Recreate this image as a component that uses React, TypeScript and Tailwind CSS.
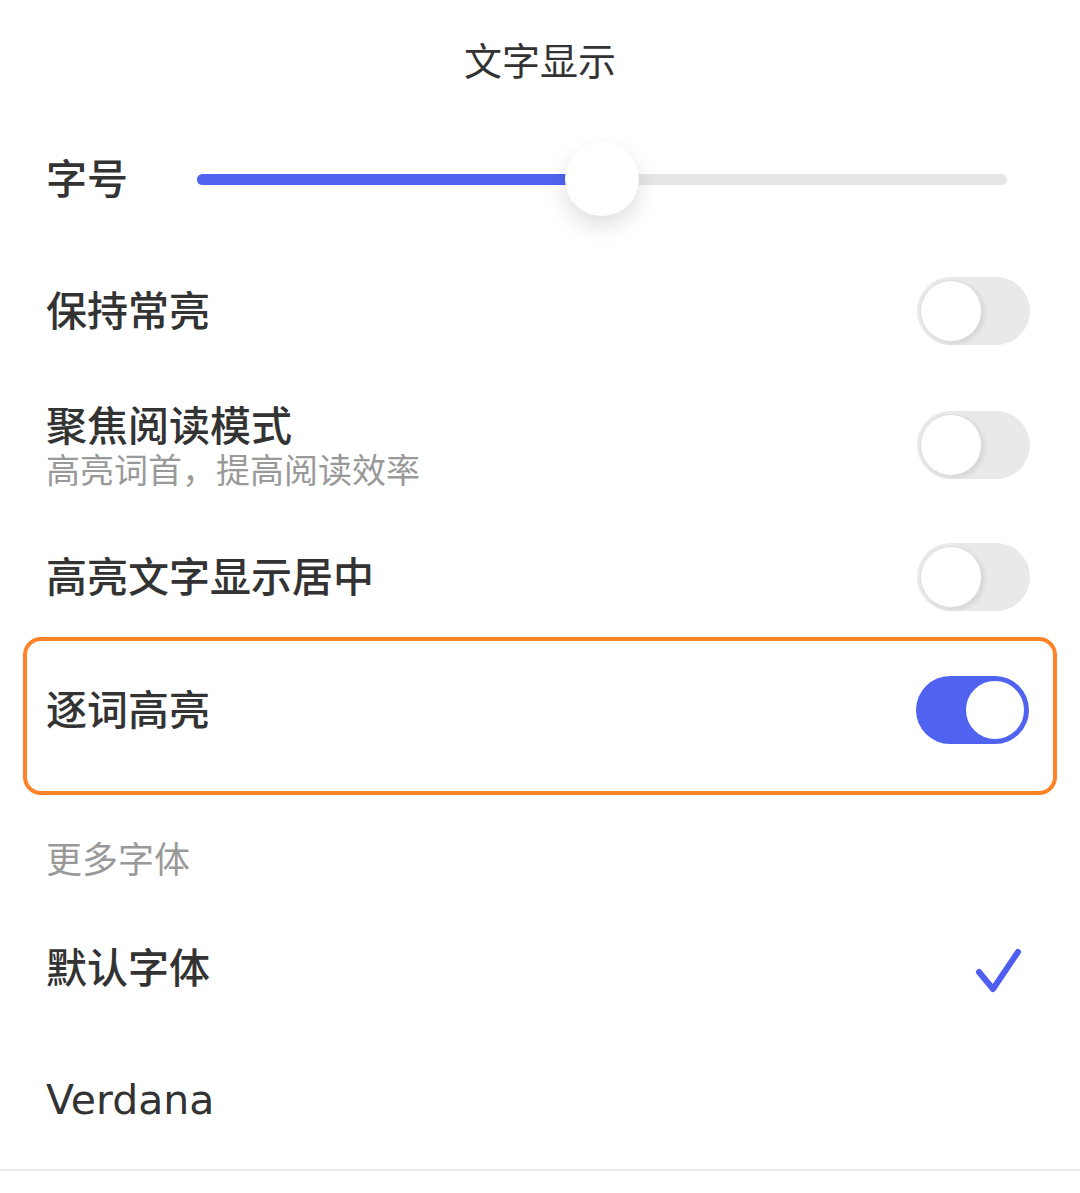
import React, { useState } from 'react';

const font = { fontFamily: '"Noto Sans CJK SC", "Noto Sans", sans-serif' };

const Toggle = ({ on, onClick }: { on: boolean; onClick: () => void }) => (
  <button
    onClick={onClick}
    className={`flex h-[68px] w-[113px] shrink-0 items-center rounded-full p-[3px] ${
      on ? 'justify-end bg-[#4f63f0]' : 'justify-start bg-[#e9e9e9]'
    }`}
  >
    <span
      className={`block h-[62px] w-[62px] rounded-full bg-white ${
        on
          ? 'border-[2px] border-[#4f63f0]'
          : 'border border-[#dcdcdc] shadow-[3px_2px_4px_rgba(0,0,0,0.08)]'
      }`}
    />
  </button>
);

const Check = () => (
  <svg width="52" height="52" viewBox="0 0 52 52" fill="none">
    <path
      d="M5 30 L19 47 L44 10"
      stroke="#4f5ef0"
      strokeWidth="6"
      strokeLinecap="round"
      strokeLinejoin="round"
    />
  </svg>
);

const App = () => {
  const [keepOn, setKeepOn] = useState(false);
  const [focus, setFocus] = useState(false);
  const [center, setCenter] = useState(false);
  const [wordHl, setWordHl] = useState(true);
  const [fontSel, setFontSel] = useState('default');

  return (
    <div className="min-h-[1193px] w-[1080px] bg-white text-[#333333]" style={font}>
      {/* Title */}
      <div className="flex h-[120px] items-center justify-center pb-[4px] text-[38px] font-normal text-[#333333]">
        文字显示
      </div>

      {/* Font size slider */}
      <div className="flex h-[124px] items-center pb-[6px] pl-[46px] pr-[73px]">
        <div className="w-[151px] pb-[6px] text-[41px] font-medium leading-none">字号</div>
        <div className="relative h-[11px] flex-1 rounded-full bg-[#e6e6e6]">
          <div className="h-full w-[404px] rounded-full bg-[#4f63f0]" />
          <div className="absolute left-[368px] top-1/2 h-[74px] w-[74px] -translate-y-1/2 rounded-full bg-white shadow-[0_10px_22px_rgba(0,0,0,0.13)]" />
        </div>
      </div>

      {/* Toggle rows */}
      <div className="flex h-[134px] items-center justify-between pl-[46px] pr-[50px]">
        <span className="pb-[6px] text-[41px] font-medium leading-none">保持常亮</span>
        <Toggle on={keepOn} onClick={() => setKeepOn(!keepOn)} />
      </div>

      <div className="flex h-[133px] items-center justify-between pl-[46px] pr-[50px]">
        <div className="flex flex-col pb-[2px]">
          <span className="text-[41px] font-medium leading-[50px]">聚焦阅读模式</span>
          <span className="text-[34px] leading-[42px] text-[#999999]">高亮词首，提高阅读效率</span>
        </div>
        <Toggle on={focus} onClick={() => setFocus(!focus)} />
      </div>

      <div className="flex h-[126px] items-center justify-between pl-[46px] pr-[50px] pt-[6px]">
        <span className="pb-[6px] text-[41px] font-medium leading-none">高亮文字显示居中</span>
        <Toggle on={center} onClick={() => setCenter(!center)} />
      </div>

      {/* Highlighted row */}
      <div className="mx-[23px] flex h-[158px] items-center justify-between rounded-[18px] border-[4px] border-[#ff8228] pb-[12px] pl-[19px] pr-[24px]">
        <span className="pb-[6px] text-[41px] font-medium leading-none">逐词高亮</span>
        <Toggle on={wordHl} onClick={() => setWordHl(!wordHl)} />
      </div>

      {/* More fonts */}
      <div className="flex h-[106px] items-center pl-[46px] pt-[24px]">
        <span className="pb-[6px] text-[36px] leading-none text-[#999999]">更多字体</span>
      </div>

      <button
        onClick={() => setFontSel('default')}
        className="flex h-[134px] w-full items-center justify-between pl-[46px] pr-[54px]"
      >
        <span className="pb-[6px] text-[41px] font-medium leading-none">默认字体</span>
        {fontSel === 'default' && <Check />}
      </button>

      <button
        onClick={() => setFontSel('verdana')}
        className="flex h-[136px] w-full items-center justify-between border-b-2 border-[#ececec] pl-[46px] pr-[54px]"
      >
        <span
          className="pb-[4px] text-[41px] font-normal leading-none"
          style={{ fontFamily: '"DejaVu Sans", "Noto Sans", sans-serif' }}
        >
          Verdana
        </span>
        {fontSel === 'verdana' && <Check />}
      </button>
    </div>
  );
};

export default App;
